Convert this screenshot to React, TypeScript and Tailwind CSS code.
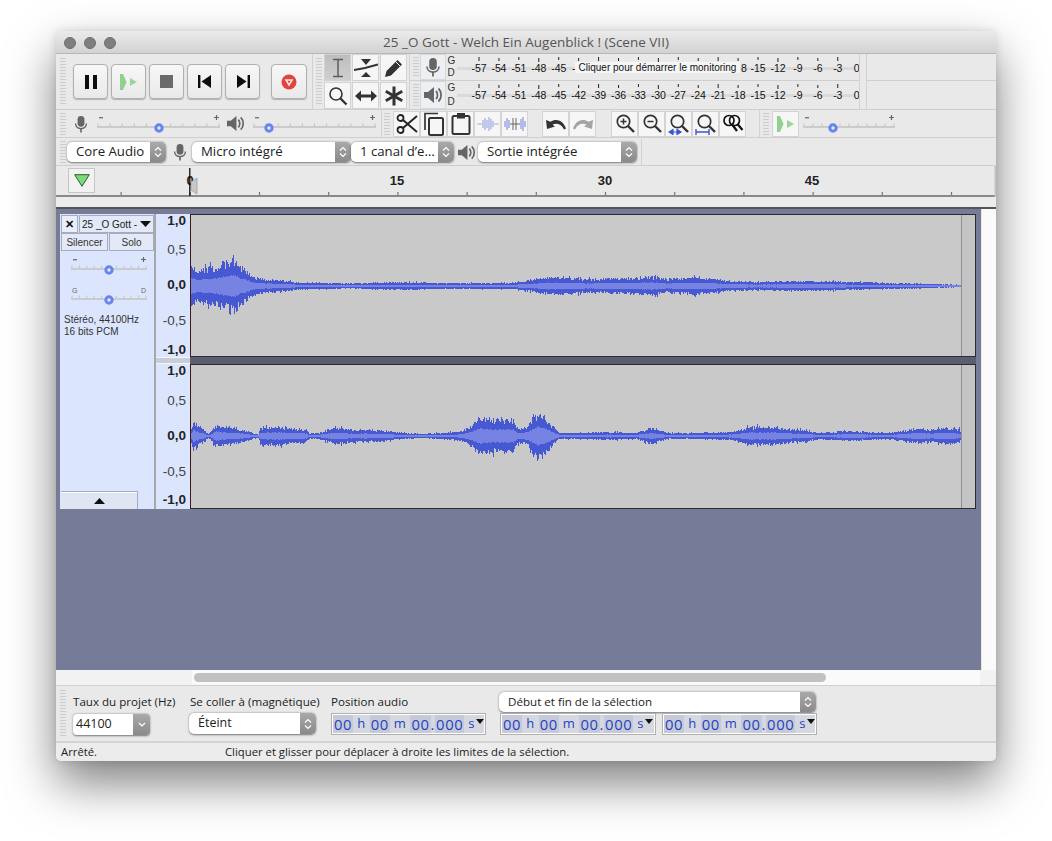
import React from "react";

const sans = "font-['Open_Sans','Liberation_Sans',sans-serif]";

function Grip({ className = "" }: { className?: string }) {
  return (
    <div
      className={
        "w-[6px] shrink-0 bg-[repeating-linear-gradient(to_bottom,#cdcdcd_0,#cdcdcd_1px,#e8e8e8_1px,#e8e8e8_3px)] " +
        className
      }
    />
  );
}

function Mic({ size = 20, color = "#666" }: { size?: number; color?: string }) {
  return (
    <svg width={size} height={size} viewBox="0 0 20 20">
      <rect x="6.2" y="1" width="7.6" height="12" rx="3.8" fill={color} />
      <path d="M4 9.5 C4 17 16 17 16 9.5" fill="none" stroke={color} strokeWidth="1.6" />
      <path d="M10 15 V19.5" stroke={color} strokeWidth="1.8" />
    </svg>
  );
}

function Speaker({ size = 20, color = "#666" }: { size?: number; color?: string }) {
  return (
    <svg width={size} height={size} viewBox="0 0 20 20">
      <path d="M1 7 H5 L11 2 V18 L5 13 H1 Z" fill={color} />
      <path d="M13 6 C15 8 15 12 13 14" fill="none" stroke={color} strokeWidth="1.8" />
      <path d="M15.5 3.5 C19 7 19 13 15.5 16.5" fill="none" stroke={color} strokeWidth="1.8" />
    </svg>
  );
}

function PlayGreen() {
  return (
    <svg width="18" height="16" viewBox="0 0 18 16">
      <path d="M0 0 H3 L6.5 8 L3 16 H0 Z" fill="#8fd18f" />
      <path d="M10 4 L17 8 L10 12 Z" fill="#9ad69a" />
    </svg>
  );
}

function TransportBtn({ children, w = "w-[35px]" }: { children: React.ReactNode; w?: string }) {
  return (
    <div
      className={
        w +
        " h-[35px] shrink-0 flex items-center justify-center rounded-[4px] border border-[#b0b0b0] bg-gradient-to-b from-[#f7f7f7] to-[#e9e9e9] shadow-[0_1px_1px_rgba(0,0,0,0.25)]"
      }
    >
      {children}
    </div>
  );
}

function ToolBtn({ children, on = false }: { children: React.ReactNode; on?: boolean }) {
  return (
    <div
      className={
        "w-[27px] h-[27px] shrink-0 flex items-center justify-center border border-[#d2d2d2] " +
        (on ? "bg-gradient-to-b from-[#bdbdbd] to-[#cfcfcf]" : "bg-[#f6f6f6]")
      }
    >
      {children}
    </div>
  );
}

function EditBtn({ children }: { children: React.ReactNode }) {
  return (
    <div className="w-[27px] h-[26px] shrink-0 flex items-center justify-center border border-[#d4d4d4] bg-[#f6f6f6]">
      {children}
    </div>
  );
}

function Slider({
  w,
  thumb,
  left = "-",
  right = "+",
  color = "#6a85ea",
}: {
  w: number;
  thumb: number;
  left?: string;
  right?: string;
  color?: string;
}) {
  const ticks: number[] = [];
  for (let i = 0; i <= 10; i++) ticks.push(1 + ((w - 2) * i) / 10);
  return (
    <svg width={w} height="24" viewBox={`0 0 ${w} 24`} className="shrink-0">
      {left === "-" ? (
        <rect x="2" y="5" width="4" height="1.4" fill="#777" />
      ) : (
        <text x="1" y="9" fontSize="7" fill="#666" fontFamily="Liberation Sans">{left}</text>
      )}
      {right === "+" ? (
        <path d={`M${w - 6} 5.5 h5 M${w - 3.5} 3 v5`} stroke="#666" strokeWidth="1.2" />
      ) : (
        <text x={w - 6} y="9" fontSize="7" fill="#666" fontFamily="Liberation Sans">{right}</text>
      )}
      {ticks.map((x) => (
        <rect key={x} x={x - 0.5} y="11.5" width="1" height="3" fill="#c4c4c4" />
      ))}
      <rect x="0" y="14" width={w} height="2" fill="#cbcbcb" />
      <circle cx={thumb} cy="16" r="3.2" fill="#e4e8fb" stroke={color} strokeWidth="3" />
    </svg>
  );
}

function Chevrons() {
  return (
    <svg width="8" height="12" viewBox="0 0 8 12">
      <path d="M1 4.5 L4 1.5 L7 4.5 M1 7.5 L4 10.5 L7 7.5" fill="none" stroke="#fff" strokeWidth="1.2" />
    </svg>
  );
}

function Select({
  label,
  w,
  h = "h-[20px]",
  text = "text-[13.2px]",
  pl = "pl-[9px]",
}: {
  label: string;
  w: string;
  h?: string;
  text?: string;
  pl?: string;
}) {
  return (
    <div
      className={
        w + " " + h +
        " shrink-0 flex items-stretch rounded-[5px] bg-white shadow-[0_0.5px_2px_rgba(0,0,0,0.5)] overflow-hidden"
      }
    >
      <div className={"flex-1 flex items-center whitespace-nowrap text-[#222] " + pl + " " + text}>{label}</div>
      <div className="w-[16px] flex items-center justify-center bg-gradient-to-b from-[#a9a9a9] to-[#8a8a8a]">
        <Chevrons />
      </div>
    </div>
  );
}

const meterLabels = [-57, -54, -51, -48, -45, -42, -39, -36, -33, -30, -27, -24, -21, -18, -15, -12, -9, -6, -3, 0];

function Meter({ covered = false }: { covered?: boolean }) {
  return (
    <svg width="402" height="27" viewBox="0 0 402 27" className="shrink-0">
      <rect x="0" y="13" width="398" height="3" fill="#dadada" />
      {meterLabels.map((v, i) => {
        const x = 22 + i * 19.93;
        const hidden = covered && i >= 5 && i <= 13;
        return (
          <g key={v}>
            <rect x={(i === 19 ? x + 3 : x) - 0.5} y={i % 2 === 1 ? 4 : 3} width="1" height={i % 3 === 0 ? 4 : 3} fill="#222" />
            {!hidden && (
              <text
                x={i === 19 ? x - 1 : x}
                y="18"
                textAnchor="middle"
                fontSize="10.5"
                fill="#111"
                letterSpacing="-0.1"
                fontFamily="Liberation Sans, sans-serif"
              >
                {v}
              </text>
            )}
          </g>
        );
      })}
      {covered && (
        <>
          <text x="115" y="18" fontSize="10.5" fill="#111" fontFamily="Liberation Sans, sans-serif">-</text>
          <text x="284" y="18" fontSize="10.5" fill="#111" fontFamily="Liberation Sans, sans-serif">8</text>
        </>
      )}
    </svg>
  );
}

function GD() {
  return (
    <div className="w-[10px] ml-[2px] flex flex-col justify-between py-[1px] text-[10px] leading-[12px] text-[#333] font-['Liberation_Sans',sans-serif]">
      <span>G</span>
      <span>D</span>
    </div>
  );
}

function Ruler() {
  const ticks: number[] = [];
  for (let x = 121 - 56; x < 940; x += 69.2) ticks.push(x);
  const labels: [number, string][] = [
    [397 - 56, "15"],
    [605 - 56, "30"],
    [812 - 56, "45"],
  ];
  return (
    <svg width="940" height="31" viewBox="0 0 940 31" className="block">
      {ticks.map((x) => (
        <rect key={x} x={x - 0.5} y="26" width="1.2" height="3" fill="#777" />
      ))}
      <rect x="0" y="29" width="940" height="2" fill="#8a8a8a" />
      <rect x="938.5" y="0" width="1.5" height="31" fill="#c4c4c4" />
      {labels.map(([x, t]) => (
        <text key={t} x={x} y="19" textAnchor="middle" fontSize="13" fontWeight="700" fill="#222" fontFamily="Liberation Sans, sans-serif">
          {t}
        </text>
      ))}
      <text x="134" y="19" textAnchor="middle" fontSize="13" fontWeight="700" fill="#222" fontFamily="Liberation Sans, sans-serif">0</text>
      <path d="M135 16 L141 12 V28 L135 24 Z" fill="#c8c8c8" stroke="#999" strokeWidth="0.7" />
      <rect x="133.2" y="2" width="1.2" height="28" fill="#000" />
    </svg>
  );
}

type Pt = [number, number];

function interp(points: Pt[], x: number) {
  for (let i = 0; i < points.length - 1; i++) {
    const [a, av] = points[i];
    const [b, bv] = points[i + 1];
    if (x >= a && x <= b) return av + ((bv - av) * (x - a)) / (b - a || 1);
  }
  return points[points.length - 1][1];
}

function Wave({ points, center, seed, h }: { points: Pt[]; center: number; seed: number; h: number }) {
  let s = seed;
  const rnd = () => {
    s = (s * 16807) % 2147483647;
    return s / 2147483647;
  };
  let outer = "";
  let inner = "";
  for (let px = 190; px < 960; px++) {
    const x = px - 190 + 0.5;
    const a = interp(points, px);
    const big = rnd() > 0.9 ? 1.2 : 1;
    const up = a * (0.62 + 0.38 * rnd()) * big;
    const dn = a * (0.62 + 0.38 * rnd()) * big;
    const r = Math.max(0.6, a * 0.36 * (0.9 + 0.2 * rnd()));
    outer += `M${x} ${(center - up - 0.5).toFixed(0)}V${(center + dn + 0.5).toFixed(0)}`;
    inner += `M${x} ${(center - r).toFixed(0)}V${(center + r).toFixed(0)}`;
  }
  return (
    <svg width="770" height={h} viewBox={`0 0 770 ${h}`} className="block shrink-0" shapeRendering="crispEdges">
      <path d={outer} stroke="#4658d2" strokeWidth="1" fill="none" />
      <path d={inner} stroke="#7683e2" strokeWidth="1" fill="none" />
    </svg>
  );
}

const env1: Pt[] = [
  [190, 22], [196, 17], [205, 19], [215, 22], [225, 26], [232, 31], [238, 22], [244, 18], [250, 11], [256, 9],
  [265, 7], [280, 6], [295, 4], [320, 3], [350, 2.5], [400, 4], [430, 3], [470, 3], [510, 3], [530, 6], [545, 9],
  [565, 9], [585, 7], [610, 8], [630, 8], [650, 10], [665, 7], [690, 9], [710, 8], [730, 5], [760, 4], [790, 5],
  [820, 5], [850, 4], [880, 3], [910, 2.5], [935, 1.5], [960, 1],
];
const env2: Pt[] = [
  [190, 8], [192, 15], [197, 11], [203, 6], [207, 2], [211, 6], [214, 12], [225, 10], [240, 7], [247, 5], [252, 2],
  [257, 1.5], [259, 9], [275, 10], [295, 8], [305, 7], [308, 2.5], [318, 3], [325, 6], [335, 9], [350, 7], [380, 6],
  [400, 3], [420, 2], [440, 3], [455, 4], [462, 6], [470, 11], [478, 20], [490, 18], [505, 19], [512, 18], [516, 8],
  [525, 9], [530, 16], [537, 26], [545, 19], [552, 10], [558, 3], [580, 3], [610, 4], [635, 3], [642, 6], [650, 8],
  [658, 6], [665, 3], [700, 3], [730, 4], [745, 9], [770, 10], [790, 7], [805, 6], [818, 3], [850, 5], [885, 3],
  [900, 5], [912, 8], [930, 7], [945, 9], [958, 7], [960, 1],
];

const scaleCls = "block text-right pr-[4px] text-[#222] h-[14px] leading-[14px] text-[13.5px] font-['Liberation_Sans',sans-serif]";

function ScaleTop() {
  return (
    <div className="h-[143px] flex flex-col">
      <span className={scaleCls + " font-bold"}>1,0</span>
      <span className={scaleCls + " mt-[15px] !text-[#444]"}>0,5</span>
      <span className={scaleCls + " mt-[21px] font-bold"}>0,0</span>
      <span className={scaleCls + " mt-[22px] !text-[#444]"}>-0,5</span>
      <span className={scaleCls + " mt-[15px] font-bold"}>-1,0</span>
    </div>
  );
}

function ScaleBottom() {
  return (
    <div className="h-[145px] flex flex-col">
      <span className={scaleCls + " font-bold"}>1,0</span>
      <span className={scaleCls + " mt-[16px] !text-[#444]"}>0,5</span>
      <span className={scaleCls + " mt-[21px] font-bold"}>0,0</span>
      <span className={scaleCls + " mt-[22px] !text-[#444]"}>-0,5</span>
      <span className={scaleCls + " mt-[14px] font-bold"}>-1,0</span>
    </div>
  );
}

function TimeBox({ w }: { w: string }) {
  const seg = "flex items-center bg-[#c6cad8] px-[1px]";
  return (
    <div
      className={
        w +
        " h-[22px] shrink-0 flex items-stretch border border-[#b0b0b0] bg-[#d6d8e0] shadow-[inset_0_0_0_1px_#fff] py-[1px] pl-[1px] pr-[2px] text-[#1f3fc4] text-[14.8px] tracking-[0.6px] whitespace-nowrap font-['Open_Sans',sans-serif]"
      }
    >
      <span className={seg}>00</span>
      <span className="flex items-center text-[13px] mx-[4px]">h</span>
      <span className={seg}>00</span>
      <span className="flex items-center text-[13px] mx-[4px]">m</span>
      <span className={seg}>00</span>
      <span className="flex items-center">.</span>
      <span className={seg}>000</span>
      <span className="flex items-center text-[13px] ml-[4px]">s</span>
      <svg width="8" height="5" viewBox="0 0 8 5" className="ml-[1px] mt-[4px] shrink-0">
        <path d="M0 0 H8 L4 5 Z" fill="#111" />
      </svg>
    </div>
  );
}

function Mag({ children }: { children?: React.ReactNode }) {
  return (
    <svg width="22" height="22" viewBox="0 0 22 22">
      <circle cx="9.5" cy="8.5" r="6.2" fill="none" stroke="#333" strokeWidth="1.7" />
      <path d="M14 13 L20 19" stroke="#333" strokeWidth="2.4" />
      {children}
    </svg>
  );
}

export default function App() {
  return (
    <div className={"min-h-[841px] bg-white pt-[31px] pl-[56px] text-[#222] " + sans}>
      <div className="w-[940px] h-[730px] flex flex-col rounded-t-[6px] rounded-b-[5px] overflow-hidden bg-[#e9e9e9] shadow-[0_22px_48px_rgba(0,0,0,0.5),0_0_8px_rgba(0,0,0,0.12)]">
        {/* Title */}
        <div className="h-[23px] shrink-0 relative flex items-center justify-center border-b border-[#b8b8b8] bg-gradient-to-b from-[#ebebeb] to-[#d2d2d2]">
          <div className="absolute left-[8px] top-[6px] flex gap-[8px]">
            <span className="w-[12px] h-[12px] rounded-full bg-[#7f7f82] border border-[#6e6e70]" />
            <span className="w-[12px] h-[12px] rounded-full bg-[#7f7f82] border border-[#6e6e70]" />
            <span className="w-[12px] h-[12px] rounded-full bg-[#7f7f82] border border-[#6e6e70]" />
          </div>
          <span className="text-[13.5px] text-[#555] whitespace-nowrap">25 _O Gott - Welch Ein Augenblick ! (Scene VII)</span>
        </div>

        {/* Row 1 */}
        <div className="h-[56px] shrink-0 flex border-b border-[#cfcfcf]">
          <div className="w-[257px] shrink-0 flex items-center border-r border-[#d2d2d2]">
            <Grip className="ml-[4px] h-[48px]" />
            <div className="ml-[7px] flex gap-[3px]">
              <TransportBtn>
                <svg width="14" height="14" viewBox="0 0 14 14"><path d="M1 0h4v14H1zM9 0h4v14H9z" fill="#0c0c0c" /></svg>
              </TransportBtn>
              <TransportBtn><PlayGreen /></TransportBtn>
              <TransportBtn>
                <svg width="13" height="13" viewBox="0 0 13 13"><rect width="13" height="13" fill="#6a6a6a" /></svg>
              </TransportBtn>
              <TransportBtn>
                <svg width="14" height="13" viewBox="0 0 14 13"><path d="M0 0h2.4v13H0zM13 0v13L3.5 6.5z" fill="#0c0c0c" /></svg>
              </TransportBtn>
              <TransportBtn>
                <svg width="14" height="13" viewBox="0 0 14 13"><path d="M11.6 0H14v13h-2.4zM1 0v13l9.5-6.5z" fill="#0c0c0c" /></svg>
              </TransportBtn>
            </div>
            <div className="ml-[11px]">
              <TransportBtn w="w-[36px]">
                <svg width="16" height="16" viewBox="0 0 16 16">
                  <circle cx="8" cy="8" r="7.5" fill="#e2433c" />
                  <path d="M3.6 5.2 H12.4 L8 12.5 Z" fill="#f8e8e6" />
                  <path d="M6.4 6.8 H9.6 L8 9.6 Z" fill="#e2433c" />
                </svg>
              </TransportBtn>
            </div>
          </div>
          <div className="w-[97px] shrink-0 flex items-center border-r border-[#d2d2d2]">
            <Grip className="ml-[3px] h-[48px]" />
            <div className="ml-[2px] grid grid-cols-3 gap-[1px]">
              <ToolBtn on>
                <svg width="14" height="20" viewBox="0 0 14 20"><path d="M2 1.5 H12 M7 1.5 V18.5 M2 18.5 H12" stroke="#5c5c5c" strokeWidth="1.5" fill="none" /></svg>
              </ToolBtn>
              <ToolBtn>
                <svg width="24" height="20" viewBox="0 0 24 20">
                  <path d="M7 1 H17 L12 7 Z M7 19 H17 L12 14 Z" fill="#333" />
                  <path d="M0 12 L11 10 L24 6.5" stroke="#333" strokeWidth="2" fill="none" />
                </svg>
              </ToolBtn>
              <ToolBtn>
                <svg width="20" height="20" viewBox="0 0 20 20"><path d="M1 19 L2.5 13 L13.5 2 L18 6.5 L7 17.5 Z" fill="#333" /><path d="M11.8 3.8 L16.2 8.2" stroke="#f6f6f6" strokeWidth="1" /></svg>
              </ToolBtn>
              <ToolBtn>
                <svg width="20" height="20" viewBox="0 0 20 20"><circle cx="8" cy="8" r="6" fill="none" stroke="#333" strokeWidth="1.6" /><path d="M12.5 12.5 L18.5 18.5" stroke="#333" strokeWidth="2.4" /></svg>
              </ToolBtn>
              <ToolBtn>
                <svg width="22" height="12" viewBox="0 0 22 12"><path d="M0 6 L6 0.5 V4.5 H16 V0.5 L22 6 L16 11.5 V7.5 H6 V11.5 Z" fill="#333" /></svg>
              </ToolBtn>
              <ToolBtn>
                <svg width="20" height="20" viewBox="0 0 20 20"><path d="M10 0.5 V19.5 M1.8 5.2 L18.2 14.8 M18.2 5.2 L1.8 14.8" stroke="#333" strokeWidth="3" /></svg>
              </ToolBtn>
            </div>
          </div>
          <div className="flex flex-col w-[450px] shrink-0 border-r border-[#d2d2d2]">
            <div className="relative h-[27px] flex items-stretch border-b border-[#cfcfcf]">
              <Grip className="ml-[3px] my-[3px]" />
              <div className="ml-[1px] w-[27px] flex items-center justify-center border border-[#d8d8d8] bg-[#ecf0f2]"><Mic /></div>
              <GD />
              <Meter covered />
              <div className="absolute left-[165px] top-[8px] h-[11px] w-[165px] flex items-center justify-center bg-[#f6f6f6] text-[10px] text-[#111] whitespace-nowrap font-['Liberation_Sans',sans-serif]">
                Cliquer pour démarrer le monitoring
              </div>
            </div>
            <div className="h-[28px] flex items-stretch">
              <Grip className="ml-[3px] my-[3px]" />
              <div className="ml-[1px] w-[27px] flex items-center justify-center border border-[#d8d8d8] bg-[#ecf0f2]"><Speaker /></div>
              <GD />
              <Meter />
            </div>
          </div>
          <div className="w-[7px] shrink-0 border-r border-[#d2d2d2]" />
          <div className="flex-1 flex flex-col">
            <div className="h-[27px] border-b border-[#cfcfcf]" />
          </div>
        </div>

        {/* Row 2 */}
        <div className="h-[28px] shrink-0 flex items-center border-b border-[#cfcfcf]">
          <Grip className="ml-[4px] h-[22px]" />
          <div className="ml-[6px]"><Mic size={18} /></div>
          <div className="ml-[7px]"><Slider w={123} thumb={62} /></div>
          <div className="ml-[6px]"><Speaker size={19} /></div>
          <div className="ml-[8px]"><Slider w={123} thumb={16} /></div>
          <div className="ml-[5px] w-[1px] self-stretch bg-[#d2d2d2]" />
          <Grip className="ml-[2px] h-[22px]" />
          <div className="ml-[3px] flex">
            <EditBtn>
              <svg width="22" height="22" viewBox="0 0 22 22">
                <circle cx="4.5" cy="5" r="3" fill="none" stroke="#222" strokeWidth="1.8" />
                <circle cx="4.5" cy="17" r="3" fill="none" stroke="#222" strokeWidth="1.8" />
                <path d="M7 7 L21 19 M7 15 L21 3" stroke="#222" strokeWidth="1.9" />
              </svg>
            </EditBtn>
            <EditBtn>
              <svg width="22" height="24" viewBox="0 0 22 24">
                <path d="M2 18 V1.5 H15" fill="none" stroke="#333" strokeWidth="1.7" />
                <rect x="6" y="6" width="14" height="17" rx="1.5" fill="none" stroke="#333" strokeWidth="2" />
              </svg>
            </EditBtn>
            <EditBtn>
              <svg width="20" height="23" viewBox="0 0 20 23">
                <rect x="1.5" y="4" width="17" height="18" rx="1.5" fill="none" stroke="#333" strokeWidth="2" />
                <rect x="6" y="1" width="8" height="5.5" fill="#333" />
              </svg>
            </EditBtn>
            <EditBtn>
              <svg width="22" height="16" viewBox="0 0 22 16">
                <path d="M0 8 H5 M17 8 H22" stroke="#aab0d8" strokeWidth="1" />
                <path d="M6 4 V12 M8 2 V14 M10 4 V12 M12 1 V15 M14 3 V13 M16 5 V11" stroke="#8f9bdc" strokeWidth="1" />
              </svg>
            </EditBtn>
            <EditBtn>
              <svg width="22" height="16" viewBox="0 0 22 16">
                <path d="M1 5 V11 M3 2 V14 M5 4 V12 M17 3 V13 M19 1 V15 M21 5 V11" stroke="#6f80dd" strokeWidth="1" />
                <path d="M6 8 H16 M9 2 V14" stroke="#666" strokeWidth="1" />
                <path d="M12 2 V14" stroke="#666" strokeWidth="1" />
              </svg>
            </EditBtn>
          </div>
          <div className="ml-[14px] flex">
            <EditBtn>
              <svg width="22" height="14" viewBox="0 0 22 14"><path d="M1 3 L2 12 L10 9.5 L7.5 7.8 C11 5.8 16 6.6 19 12.5 L21 11.5 C18 3 11 1 5.5 4.8 Z" fill="#333" /></svg>
            </EditBtn>
            <EditBtn>
              <svg width="22" height="14" viewBox="0 0 22 14"><path d="M21 3 L20 12 L12 9.5 L14.5 7.8 C11 5.8 6 6.6 3 12.5 L1 11.5 C4 3 11 1 16.5 4.8 Z" fill="#a4a4a4" /></svg>
            </EditBtn>
          </div>
          <div className="ml-[15px] flex">
            <EditBtn>
              <Mag><path d="M6.5 8.5 H12.5 M9.5 5.5 V11.5" stroke="#333" strokeWidth="1.5" /></Mag>
            </EditBtn>
            <EditBtn>
              <Mag><path d="M6.5 8.5 H12.5" stroke="#333" strokeWidth="1.5" /></Mag>
            </EditBtn>
            <EditBtn>
              <Mag><path d="M1 19 H13 M5 16.5 L1 19 L5 21.5 Z M9 16.5 L13 19 L9 21.5 Z" stroke="#3a55d0" strokeWidth="1.2" fill="#3a55d0" /></Mag>
            </EditBtn>
            <EditBtn>
              <Mag><path d="M1 19 H14 M1 16 V22 M14 16 V22" stroke="#3a55d0" strokeWidth="1.4" fill="none" /></Mag>
            </EditBtn>
            <EditBtn>
              <svg width="22" height="22" viewBox="0 0 22 22">
                <circle cx="7" cy="7.5" r="5" fill="none" stroke="#111" strokeWidth="1.7" />
                <circle cx="12.5" cy="7.5" r="5" fill="none" stroke="#111" strokeWidth="1.7" />
                <path d="M10.5 12 L15 18 M15.5 11 L20.5 17" stroke="#111" strokeWidth="2.2" />
              </svg>
            </EditBtn>
          </div>
          <div className="ml-[13px] w-[1px] self-stretch bg-[#d2d2d2]" />
          <Grip className="ml-[3px] h-[22px]" />
          <div className="ml-[3px]">
            <EditBtn><PlayGreen /></EditBtn>
          </div>
          <div className="ml-[4px]"><Slider w={92} thumb={30} /></div>
        </div>

        {/* Row 3 */}
        <div className="h-[28px] shrink-0 flex items-center pt-[1px] border-b border-[#cfcfcf]">
          <Grip className="ml-[4px] h-[22px]" />
          <div className="ml-[1px]"><Select label="Core Audio" w="w-[99px]" /></div>
          <div className="ml-[5px]"><Mic size={18} /></div>
          <div className="ml-[3px]"><Select label="Micro intégré" w="w-[159px]" /></div>
          <Select label="1 canal d’e…" w="w-[103px]" />
          <div className="ml-[3px]"><Speaker size={19} /></div>
          <div className="ml-[2px]"><Select label="Sortie intégrée" w="w-[159px]" /></div>
          <div className="ml-[4px] w-[1px] self-stretch bg-[#d2d2d2]" />
        </div>

        {/* Ruler */}
        <div className="relative h-[31px] shrink-0">
          <Ruler />
          <div className="absolute left-[12px] top-[2px] w-[27px] h-[25px] flex items-center justify-center border border-[#c6c6c6] bg-[#f2f2f2]">
            <svg width="16" height="13" viewBox="0 0 16 13"><path d="M0.7 0.7 H15.3 L8 12.3 Z" fill="#7cd97c" stroke="#2c5c2c" strokeWidth="1" /></svg>
          </div>
        </div>
        <div className="h-[12px] shrink-0 bg-[#ececec] border-b-2 border-[#555]" />

        {/* Track area */}
        <div className="flex-1 flex min-h-0 bg-[#767b97]">
          <div className="flex-1 pt-[5px] pl-[4px] pr-[5px]">
            <div className="flex h-[295px] w-[916px] bg-[#dbe6fe]">
              {/* Track panel */}
              <div className="w-[96px] shrink-0 flex flex-col border-r-2 border-[#a8a8ac]">
                <div className="flex h-[18px] mt-[1px] ml-[1px]">
                  <div className="w-[17px] flex items-center justify-center bg-[#e8eefc] border border-[#a6acbc] text-[11px] font-bold text-[#111] font-['Liberation_Sans',sans-serif]">✕</div>
                  <div className="flex-1 flex items-center justify-between ml-[1px] pl-[2px] pr-[2px] bg-[#e3e9f8] border border-[#a6acbc] text-[10px] text-[#222] whitespace-nowrap font-['Liberation_Sans',sans-serif]">
                    <span>25 _O Gott -</span>
                    <svg width="11" height="6" viewBox="0 0 11 6"><path d="M0 0 H11 L5.5 6 Z" fill="#111" /></svg>
                  </div>
                </div>
                <div className="flex h-[18px] ml-[1px] text-[10px] text-[#333] font-['Liberation_Sans',sans-serif]">
                  <div className="w-[47px] flex items-center justify-center bg-[#e3e9f8] border border-[#a6acbc]">Silencer</div>
                  <div className="flex-1 ml-[1px] flex items-center justify-center bg-[#e3e9f8] border border-[#a6acbc]">Solo</div>
                </div>
                <div className="ml-[11px] mt-[3px]"><Slider w={76} thumb={38} /></div>
                <div className="ml-[11px] mt-[6px]"><Slider w={76} thumb={38} left="G" right="D" /></div>
                <div className="ml-[4px] mt-[6px] text-[10px] leading-[12px] text-[#333] font-['Liberation_Sans',sans-serif]">
                  <div>Stéréo, 44100Hz</div>
                  <div>16 bits PCM</div>
                </div>
                <div className="mt-auto ml-[1px] w-[77px] h-[18px] flex items-center justify-center bg-[#dfe5f3] border-t border-r border-[#a6acbc] shadow-[inset_0_1px_0_#fff]">
                  <svg width="11" height="6" viewBox="0 0 11 6"><path d="M0 6 H11 L5.5 0 Z" fill="#111" /></svg>
                </div>
              </div>
              {/* Scale */}
              <div className="w-[34px] shrink-0 flex flex-col">
                <ScaleTop />
                <div className="h-[7px] bg-[#c9cdd8] border-y border-[#f2f5ff]" />
                <ScaleBottom />
              </div>
              {/* Waves */}
              <div className="flex-1 flex flex-col min-w-0">
                <div className="h-[143px] flex bg-[#c9c9c9] border-t border-l border-r border-b border-[#2b2b33] border-l-[#401818]">
                  <Wave points={env1} center={71} seed={4711} h={141} />
                  <div className="flex-1 border-l border-[#8f8f8f] bg-[#c4c4c4]" />
                </div>
                <div className="h-[7px] bg-[#5b5e70]" />
                <div className="h-[145px] flex bg-[#c9c9c9] border-t border-l border-r border-b border-[#2b2b33] border-l-[#401818]">
                  <Wave points={env2} center={71} seed={9241} h={143} />
                  <div className="flex-1 border-l border-[#8f8f8f] bg-[#c4c4c4]" />
                </div>
              </div>
            </div>
          </div>
          <div className="w-[16px] shrink-0 bg-[#fafafa] border-l border-[#e6e6e6]" />
        </div>

        {/* Horizontal scrollbar */}
        <div className="h-[16px] shrink-0 flex border-b border-[#d0d0d0]">
          <div className="w-[136px] bg-[#f2f2f2]" />
          <div className="flex-1 flex items-center bg-[#fafafa] pl-[2px]">
            <div className="w-[632px] h-[9px] rounded-full bg-[#c1c1c1]" />
          </div>
          <div className="w-[16px] bg-[#f2f2f2]" />
        </div>

        {/* Selection bar */}
        <div className="h-[57px] shrink-0 flex text-[11.6px] text-[#222] border-b-2 border-[#d4d4d4]">
          <Grip className="ml-[4px] mt-[4px] h-[46px]" />
          <div className="ml-[7px] flex flex-col w-[117px]">
            <div className="h-[27px] pt-[8px] leading-[16px] whitespace-nowrap">Taux du projet (Hz)</div>
            <div className="mt-[1px] w-[77px] h-[21px] flex items-stretch rounded-[4px] bg-white shadow-[0_0.5px_2px_rgba(0,0,0,0.5)] overflow-hidden">
              <div className="flex-1 flex items-center pl-[3px] text-[12.5px]">44100</div>
              <div className="w-[17px] flex items-center justify-center bg-gradient-to-b from-[#a9a9a9] to-[#8a8a8a]">
                <svg width="8" height="5" viewBox="0 0 8 5"><path d="M1 1 L4 4 L7 1" fill="none" stroke="#fff" strokeWidth="1.2" /></svg>
              </div>
            </div>
          </div>
          <div className="flex flex-col w-[141px]">
            <div className="h-[27px] pt-[8px] leading-[16px] whitespace-nowrap">Se coller à (magnétique)</div>
            <div className="-ml-[1px]"><Select label="Éteint" w="w-[127px]" h="h-[21px]" text="text-[12.5px]" /></div>
          </div>
          <div className="flex flex-col w-[168px]">
            <div className="h-[27px] pt-[8px] leading-[16px] whitespace-nowrap">Position audio</div>
            <TimeBox w="w-[155px]" />
          </div>
          <div className="flex flex-col pt-[6px]">
            <Select label="Début et fin de la sélection" w="w-[317px]" text="text-[11.6px]" />
            <div className="mt-[1px] flex gap-[6px] ml-[1px]">
              <TimeBox w="w-[156px]" />
              <TimeBox w="w-[155px]" />
            </div>
          </div>
        </div>

        {/* Status */}
        <div className="h-[18px] shrink-0 flex items-center text-[11.3px] text-[#222] bg-[#ececec] whitespace-nowrap">
          <span className="ml-[5px] w-[164px]">Arrêté.</span>
          <span>Cliquer et glisser pour déplacer à droite les limites de la sélection.</span>
        </div>
      </div>
    </div>
  );
}
